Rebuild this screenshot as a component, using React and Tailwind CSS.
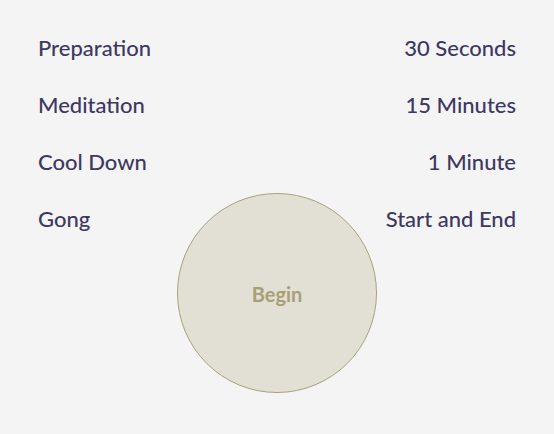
import React from 'react'

const rows = [
  ['Preparation', '30 Seconds'],
  ['Meditation', '15 Minutes'],
  ['Cool Down', '1 Minute'],
  ['Gong', 'Start and End'],
]

export default function App() {
  return (
    <div className="min-h-screen w-full bg-[#f4f4f4] px-[38px] pt-[19px] font-['Lato',sans-serif] text-[22px] font-medium text-[#3d3862]">
      {rows.map(([label, value]) => (
        <div key={label} className="flex h-[57px] items-center justify-between">
          <span>{label}</span>
          <span>{value}</span>
        </div>
      ))}
      <div className="-mt-[54px] flex justify-center">
        <button className="flex h-[200px] w-[200px] items-center justify-center rounded-full border border-[#aaa17a] bg-[#e2e0d4] pt-[2px] text-[20px] font-bold text-[#a89f74]">
          Begin
        </button>
      </div>
    </div>
  )
}
